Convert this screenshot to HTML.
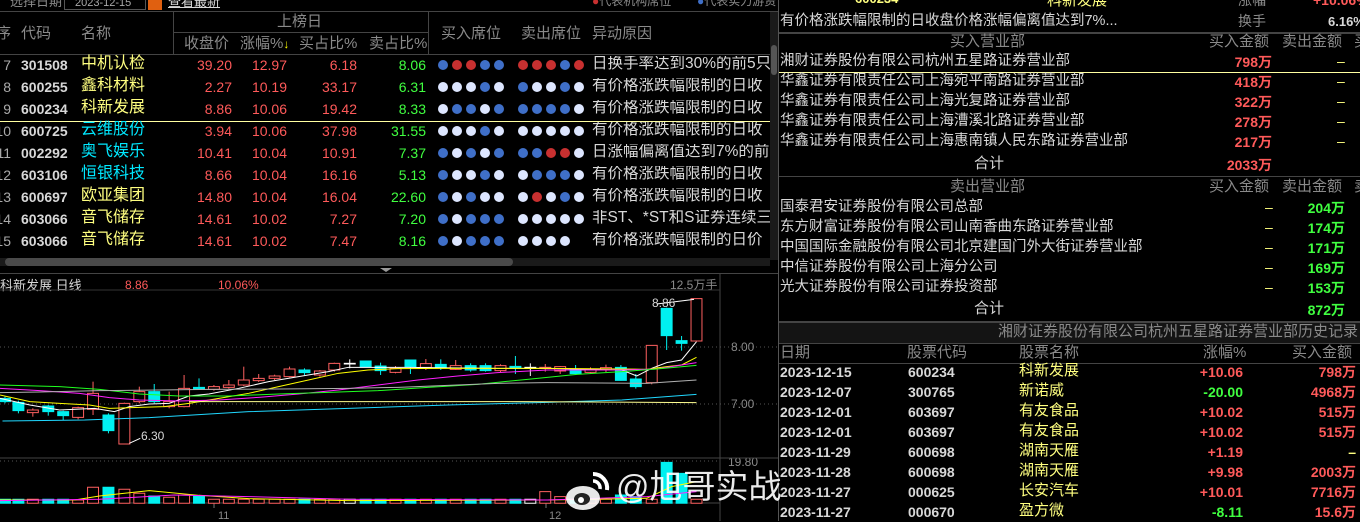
<!DOCTYPE html>
<html><head><meta charset="utf-8"><style>
*{margin:0;padding:0;box-sizing:border-box}
body{width:1360px;height:521px;background:#000;overflow:hidden;position:relative;font-family:"Liberation Sans","Noto Sans CJK SC",sans-serif;color:#c8c8c8}
.a{position:absolute;white-space:nowrap;line-height:1}
.g{color:#8a8a8a}
.y{color:#ffff80}.c{color:#00e8ff}.r{color:#ff5a5a}.gr{color:#40ff40}.w{color:#d8d8d8}
.n{font-size:14px;font-weight:bold}
.h{font-size:15px}
.dot{position:absolute;width:10px;height:10px;border-radius:50%}
.B{background:#3f6fc8}.R{background:#c83030}.W{background:#dde6ff}
.ln{position:absolute;background:#444}
</style></head><body>

<div class="a g" style="left:10px;top:-5px;font-size:13px">选择日期</div>
<div class="a" style="left:64px;top:-3px;width:82px;height:13px;border:1px solid #555;font-size:11px;color:#aaa;padding-left:10px">2023-12-15</div>
<div class="a" style="left:148px;top:-3px;width:14px;height:13px;background:#e06010"></div>
<div class="a w" style="left:168px;top:-5px;font-size:13px;text-decoration:underline">查看最新</div>
<div class="a g" style="left:592px;top:-5px;font-size:12px"><span style="color:#c83030">●</span>代表机构席位</div>
<div class="a g" style="left:697px;top:-5px;font-size:12px"><span style="color:#3f6fc8">●</span>代表实力游资</div>

<div class="ln" style="left:0;top:11px;width:778px;height:1px"></div>
<div class="ln" style="left:173px;top:11px;width:1px;height:43px"></div>
<div class="ln" style="left:428px;top:11px;width:1px;height:43px"></div>
<div class="ln" style="left:173px;top:32px;width:255px;height:1px"></div>
<div class="ln" style="left:0;top:54px;width:770px;height:1px"></div>
<div class="a g h" style="left:277px;top:14px">上榜日</div>
<div class="a g h" style="left:-4px;top:26px">序</div>
<div class="a g h" style="left:21px;top:26px">代码</div>
<div class="a g h" style="left:81px;top:26px">名称</div>
<div class="a g h" style="left:184px;top:36px">收盘价</div>
<div class="a g h" style="left:240px;top:36px">涨幅%<span style="color:#ff0;font-size:12px">↓</span></div>
<div class="a g h" style="left:299px;top:36px">买占比%</div>
<div class="a g h" style="left:369px;top:36px">卖占比%</div>
<div class="a g h" style="left:441px;top:26px">买入席位</div>
<div class="a g h" style="left:521px;top:26px">卖出席位</div>
<div class="a g h" style="left:592px;top:26px">异动原因</div>
<div class="a" style="left:0;top:121px;width:770px;height:1px;background:#ffffa0"></div>

<div id="rows"></div>
<div class="a" style="left:770px;top:12px;width:8px;height:248px;background:#1a1a1a"></div>
<div class="a" style="left:771px;top:45px;width:6px;height:30px;background:#555;border-radius:3px"></div>
<div class="a" style="left:0;top:258px;width:770px;height:8px;background:#1a1a1a"></div>
<div class="a" style="left:5px;top:258px;width:508px;height:8px;background:#4a4a4a;border-radius:4px"></div>
<div class="a" style="left:380px;top:268px;width:0;height:0;border-left:6px solid transparent;border-right:6px solid transparent;border-top:4px solid #999"></div>
<div class="ln" style="left:0;top:273px;width:778px;height:1px"></div>

<div class="a w" style="left:0;top:279px;font-size:13px">科新发展 日线</div>
<div class="a r" style="left:125px;top:279px;font-size:12px">8.86</div>
<div class="a r" style="left:218px;top:279px;font-size:12px">10.06%</div>
<div class="a g" style="left:670px;top:279px;font-size:12px">12.5万手</div>
<div class="a g" style="left:731px;top:341px;font-size:12px">8.00</div>
<div class="a g" style="left:731px;top:398px;font-size:12px">7.00</div>
<div class="a g" style="left:728px;top:456px;font-size:12px">19.80</div>
<div class="a g" style="left:218px;top:511px;font-size:11px">11</div>
<div class="a g" style="left:549px;top:511px;font-size:11px">12</div>

<svg width="778" height="521" style="position:absolute;left:0;top:0">
<line x1="720" y1="274" x2="720" y2="521" stroke="#444"/>
<line x1="0" y1="290" x2="720" y2="290" stroke="#333"/>
<line x1="0" y1="347" x2="778" y2="347" stroke="#555" stroke-dasharray="1,3"/>
<line x1="0" y1="404" x2="778" y2="404" stroke="#555" stroke-dasharray="1,3"/>
<line x1="0" y1="458" x2="778" y2="458" stroke="#444"/>
<line x1="0" y1="461" x2="720" y2="461" stroke="#555" stroke-dasharray="1,3"/>
<line x1="0" y1="503" x2="720" y2="503" stroke="#444"/>
<line x1="214" y1="503" x2="214" y2="508" stroke="#777"/>
<line x1="546" y1="503" x2="546" y2="508" stroke="#777"/>
<g transform="translate(0,270) scale(0.4975,0.3333)" fill="none" stroke-width="1" id="cg">
</g>
</svg>

<div class="ln" style="left:778px;top:0;width:1px;height:521px;background:#555"></div>
<div class="a y" style="left:855px;top:-8px;font-size:13px;font-weight:bold">600234</div>
<div class="a y" style="left:1047px;top:-7px;font-size:15px">科新发展</div>
<div class="a g" style="left:1238px;top:-7px;font-size:14px">涨幅</div>
<div class="a r" style="left:1313px;top:-7px;font-size:14px;font-weight:bold">+10.06%</div>
<div class="a w" style="left:780px;top:14px;font-size:14.5px">有价格涨跌幅限制的日收盘价格涨幅偏离值达到7%...</div>
<div class="a g" style="left:1238px;top:14px;font-size:14px">换手</div>
<div class="a w" style="left:1328px;top:15px;font-size:13px;font-weight:bold">6.16%</div>
<div class="ln" style="left:779px;top:32px;width:581px;height:2px"></div>
<div class="a g h" style="left:950px;top:34px">买入营业部</div>
<div class="a g h" style="left:1209px;top:34px">买入金额</div>
<div class="a g h" style="left:1282px;top:34px">卖出金额</div>
<div class="a g h" style="left:1354px;top:34px">买</div>
<div class="a" style="left:779px;top:72px;width:581px;height:1px;background:#ffffa0"></div>
<div class="ln" style="left:779px;top:176px;width:581px;height:1px"></div>
<div class="a g h" style="left:950px;top:179px">卖出营业部</div>
<div class="a g h" style="left:1209px;top:179px">买入金额</div>
<div class="a g h" style="left:1282px;top:179px">卖出金额</div>
<div class="a g h" style="left:1354px;top:179px">卖</div>
<div class="ln" style="left:779px;top:321px;width:581px;height:2px"></div>
<div class="a" style="left:779px;top:323px;width:581px;height:20px;background:#141414"></div>
<div class="a g h" style="right:2px;top:324px">湘财证券股份有限公司杭州五星路证券营业部历史记录</div>
<div class="ln" style="left:779px;top:343px;width:581px;height:1px"></div>
<div class="a g h" style="left:780px;top:345px">日期</div>
<div class="a g h" style="left:907px;top:345px">股票代码</div>
<div class="a g h" style="left:1019px;top:345px">股票名称</div>
<div class="a g h" style="left:1203px;top:345px">涨幅%</div>
<div class="a g h" style="left:1292px;top:345px">买入金额</div>
<div class="ln" style="left:779px;top:363px;width:581px;height:1px"></div>
<div id="rp"></div>

<svg width="50" height="45" style="position:absolute;left:563px;top:468px">
<ellipse cx="20" cy="30" rx="17" ry="12" fill="#fff" opacity=".9"/>
<ellipse cx="19" cy="31" rx="8" ry="6" fill="#222"/>
<circle cx="18" cy="32" r="3" fill="#fff"/>
<path d="M30 6 A14 14 0 0 1 44 22" stroke="#fff" stroke-width="4" fill="none"/>
<path d="M30 13 A7 7 0 0 1 37 21" stroke="#fff" stroke-width="3.5" fill="none"/>
</svg>
<div class="a" style="left:616px;top:470px;font-size:33px;color:#fff;opacity:.92">@旭哥实战</div>

<script>
var rows=[
["7","301508","中机认检","y","39.20","12.97","6.18","8.06","BRRBB","RRRBR","日换手率达到30%的前5只"],
["8","600255","鑫科材料","y","2.27","10.19","33.17","6.31","WWWBW","BWWBW","有价格涨跌幅限制的日收"],
["9","600234","科新发展","y","8.86","10.06","19.42","8.33","WBBWB","BBBBW","有价格涨跌幅限制的日收"],
["10","600725","云维股份","c","3.94","10.06","37.98","31.55","WWWBW","WWWWW","有价格涨跌幅限制的日收"],
["11","002292","奥飞娱乐","c","10.41","10.04","10.91","7.37","BWBWB","BBRRW","日涨幅偏离值达到7%的前"],
["12","603106","恒银科技","c","8.66","10.04","16.16","5.13","BWWBW","WBBBW","有价格涨跌幅限制的日收"],
["13","600697","欧亚集团","y","14.80","10.04","16.04","22.60","BWBWW","WRWBW","有价格涨跌幅限制的日收"],
["14","603066","音飞储存","y","14.61","10.02","7.27","7.20","BWBBB","WWWWW","非ST、*ST和S证券连续三"],
["15","603066","音飞储存","y","14.61","10.02","7.47","8.16","BWBBB","WWWW","有价格涨跌幅限制的日价"]];
var h="";
rows.forEach(function(r,i){var t=58+i*22;
h+='<div class="a w n" style="right:1349px;top:'+t+'px;font-weight:normal;color:#aaa">'+r[0]+'</div>';
h+='<div class="a w n" style="left:21px;top:'+t+'px">'+r[1]+'</div>';
h+='<div class="a '+r[3]+'" style="left:81px;top:'+(t-2)+'px;font-size:16px">'+r[2]+'</div>';
h+='<div class="a r n" style="right:1128px;top:'+t+'px;font-weight:normal">'+r[4]+'</div>';
h+='<div class="a r n" style="right:1073px;top:'+t+'px;font-weight:normal">'+r[5]+'</div>';
h+='<div class="a r n" style="right:1003px;top:'+t+'px;font-weight:normal">'+r[6]+'</div>';
h+='<div class="a gr n" style="right:934px;top:'+t+'px;font-weight:normal">'+r[7]+'</div>';
for(var k=0;k<r[8].length;k++)h+='<div class="dot '+r[8][k]+'" style="left:'+(438+k*14)+'px;top:'+(t+2)+'px"></div>';
for(var k=0;k<r[9].length;k++)h+='<div class="dot '+r[9][k]+'" style="left:'+(518+k*14)+'px;top:'+(t+2)+'px"></div>';
h+='<div class="a w" style="left:592px;top:'+(t-2)+'px;font-size:15.5px;width:178px;overflow:hidden">'+r[10]+'</div>';});
document.getElementById('rows').innerHTML=h;

var rp="";
var buy=[["湘财证券股份有限公司杭州五星路证券营业部","798万"],["华鑫证券有限责任公司上海宛平南路证券营业部","418万"],["华鑫证券有限责任公司上海光复路证券营业部","322万"],["华鑫证券有限责任公司上海漕溪北路证券营业部","278万"],["华鑫证券有限责任公司上海惠南镇人民东路证券营业部","217万"]];
buy.forEach(function(b,i){var t=54+i*20;
rp+='<div class="a w" style="left:780px;top:'+t+'px;font-size:14.5px">'+b[0]+'</div>';
rp+='<div class="a r n" style="right:88px;top:'+(t+1)+'px">'+b[1]+'</div>';
rp+='<div class="a y" style="left:1337px;top:'+t+'px;font-size:14px">–</div>';});
rp+='<div class="a w" style="left:974px;top:156px;font-size:15px">合计</div><div class="a r n" style="right:88px;top:158px">2033万</div>';
var sell=[["国泰君安证券股份有限公司总部","204万"],["东方财富证券股份有限公司山南香曲东路证券营业部","174万"],["中国国际金融股份有限公司北京建国门外大街证券营业部","171万"],["中信证券股份有限公司上海分公司","169万"],["光大证券股份有限公司证券投资部","153万"]];
sell.forEach(function(b,i){var t=200+i*20;
rp+='<div class="a w" style="left:780px;top:'+t+'px;font-size:14.5px">'+b[0]+'</div>';
rp+='<div class="a y" style="left:1265px;top:'+t+'px;font-size:14px">–</div>';
rp+='<div class="a gr n" style="right:15px;top:'+(t+1)+'px">'+b[1]+'</div>';});
rp+='<div class="a w" style="left:974px;top:301px;font-size:15px">合计</div><div class="a gr n" style="right:15px;top:303px">872万</div>';
var hist=[["2023-12-15","600234","科新发展","+10.06","r","798万"],["2023-12-07","300765","新诺威","-20.00","gr","4968万"],["2023-12-01","603697","有友食品","+10.02","r","515万"],["2023-12-01","603697","有友食品","+10.02","r","515万"],["2023-11-29","600698","湖南天雁","+1.19","r","–"],["2023-11-28","600698","湖南天雁","+9.98","r","2003万"],["2023-11-27","000625","长安汽车","+10.01","r","7716万"],["2023-11-27","000670","盈方微","-8.11","gr","15.6万"]];
hist.forEach(function(b,i){var t=365+i*20;
rp+='<div class="a w n" style="left:780px;top:'+t+'px">'+b[0]+'</div>';
rp+='<div class="a w n" style="left:908px;top:'+t+'px">'+b[1]+'</div>';
rp+='<div class="a y" style="left:1019px;top:'+(t-2)+'px;font-size:15px">'+b[2]+'</div>';
rp+='<div class="a '+b[4]+' n" style="right:117px;top:'+t+'px">'+b[3]+'</div>';
rp+='<div class="a '+(b[5]=="–"?"y":"r")+' n" style="right:4px;top:'+t+'px">'+b[5]+'</div>';});
document.getElementById('rp').innerHTML=rp;

var C=[[10,385,395,"c",380,400],[37,397,422,"c",392,430],[66,420,428,"r",415,440],[97,408,425,"c",405,437],[127,425,437,"c",422,450],[157,413,442,"r",410,448],[187,370,418,"r",335,435],[218,435,482,"c",430,490],[250,400,522,"r",398,522],[280,365,395,"r",350,400],[310,365,395,"c",342,400],[340,395,410,"r",365,415],[370,355,410,"r",315,412],[400,352,358,"c",325,360],[430,350,358,"r",345,362],[460,345,352,"r",330,356],[490,330,345,"r",290,348],[520,325,332,"r",312,336],[552,318,325,"r",314,330],[582,297,320,"r",290,322],[612,300,308,"c",295,316],[643,303,315,"r",300,320],[672,280,300,"r",278,305],[703,280,282,"w",268,295],[735,273,290,"c",273,292],[765,288,302,"c",278,315],[795,295,307,"r",288,310],[825,270,290,"c",270,312],[856,281,292,"r",267,300],[886,283,293,"c",268,300],[916,287,298,"r",270,300],[946,287,300,"c",280,305],[976,287,302,"c",280,305],[1006,287,302,"r",283,306],[1036,289,293,"c",258,312],[1066,292,295,"w",280,318],[1096,292,293,"r",282,305],[1126,290,303,"r",288,312],[1157,298,311,"c",285,314],[1187,298,307,"r",292,310],[1218,293,300,"r",284,306],[1248,292,331,"c",285,332],[1278,327,350,"c",312,356],[1310,226,338,"r",226,343],[1340,115,197,"c",113,240],[1370,212,220,"c",198,242],[1400,86,213,"r",86,215]];
var s="",col={r:"#ff6060",c:"#00f0f0",w:"#fff"};
var V={187:652,218:652,250:658,280:670,310:678,340:682,370:675,400:678,1096:665,1126:680,1248:675,1278:680,1340:577,1370:610,157:690,1157:688};
C.forEach(function(c){var x=c[0],k=col[c[3]];
s+='<line x1="'+x+'" y1="'+c[4]+'" x2="'+x+'" y2="'+c[5]+'" stroke="'+k+'" vector-effect="non-scaling-stroke"/>';
var fill=c[3]=="c"?k:"#000";
s+='<rect x="'+(x-11)+'" y="'+c[1]+'" width="22" height="'+Math.max(2,c[2]-c[1])+'" fill="'+fill+'" stroke="'+k+'" vector-effect="non-scaling-stroke"/>';
var vt=V[x]||688;
s+='<rect x="'+(x-11)+'" y="'+vt+'" width="22" height="'+(700-vt)+'" fill="'+fill+'" stroke="'+k+'" vector-effect="non-scaling-stroke"/>';});
function P(pts,c){s+='<polyline points="'+pts+'" stroke="'+c+'" fill="none" vector-effect="non-scaling-stroke"/>';}
P("0,385 60,405 120,420 190,415 230,425 260,410 300,402 340,400 380,378 420,372 480,355 540,335 600,320 660,305 700,292 760,292 820,292 1000,295 1100,295 1250,300 1280,318 1310,295 1340,278 1370,270 1400,215","#fff");
P("0,375 60,395 120,400 180,405 220,415 280,412 330,410 380,400 440,385 500,370 560,350 620,330 680,310 740,300 800,296 900,295 1100,295 1250,297 1300,298 1340,290 1370,285 1400,262","#ffff00");
P("0,355 80,362 160,370 220,383 280,390 360,393 440,390 520,382 600,372 680,360 760,345 840,330 920,318 1000,308 1100,300 1250,300 1320,297 1400,278","#ff20ff");
P("0,345 120,350 200,358 280,372 360,378 460,378 560,372 660,367 760,362 860,352 960,343 1060,328 1160,313 1250,305 1320,297 1400,286","#20ff20");
P("0,368 80,366 200,362 320,360 420,358 560,357 700,355 800,352 900,346 1000,340 1100,338 1300,340 1400,330","#b0b0b0");
P("5,453 170,450 300,443 500,425 700,415 900,405 1100,397 1250,390 1320,382 1400,373","#20d8ff");
P("380,395 1050,395 1400,398","#ffff90");
P("0,690 150,690 200,678 300,662 400,676 500,686 700,692 1100,690 1300,685 1350,650 1400,635","#ffff00");
P("0,692 200,688 350,675 500,680 700,688 1100,690 1300,680 1400,665","#ff20ff");
P("1320,102 1395,88","#fff");P("260,520 282,505","#fff");
document.getElementById('cg').innerHTML=s;
</script>
<div class="a w" style="left:652px;top:297px;font-size:12px">8.86</div>
<div class="a w" style="left:141px;top:430px;font-size:12px">6.30</div>
</body></html>
